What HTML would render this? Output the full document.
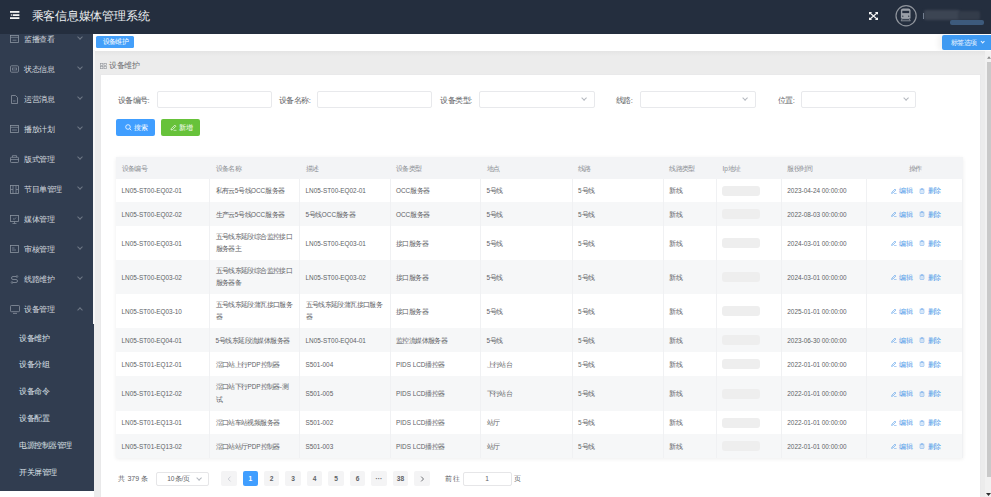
<!DOCTYPE html>
<html><head><meta charset="utf-8">
<style>
*{box-sizing:border-box;margin:0;padding:0}
html,body{width:991px;height:497px;overflow:hidden;background:#fff;font-family:"Liberation Sans",sans-serif}
.a{position:absolute}
i{font-style:normal;display:inline-block;width:var(--cw,1em)}
#hd{left:0;top:0;width:991px;height:34px;background:#242e3e}
#sb{left:0;top:34px;width:94px;height:457px;background:#313d50;overflow:hidden}
.mt{position:absolute;left:24px;color:#d3d8df;font-size:7.5px;--cw:7.5px;line-height:10px;white-space:nowrap}
.ic{position:absolute;left:10px}
.ic svg,.tbl svg,.btn svg{display:block}
.ch{position:absolute;left:77.5px;width:4px;height:4px;border-right:0.7px solid #6f7886;border-bottom:0.7px solid #6f7886;transform:rotate(45deg)}
.chu{transform:rotate(225deg)}
.si{position:absolute;left:19px;color:#dde2e8;font-size:7.5px;--cw:7.55px;line-height:10px;white-space:nowrap}
#tb{left:93px;top:34px;width:898px;height:17px;background:#fff;box-shadow:0 1px 2px rgba(0,0,0,.06)}
#ct{left:94px;top:50.5px;width:897px;height:446.5px;background:linear-gradient(#e4e4e4,#ececec 5px)}
#card{left:99.5px;top:74.3px;width:881px;height:430px;background:#fff;border:1px solid #e9e9ea}
.lbl{position:absolute;font-size:7.6px;--cw:7.5px;color:#606266;line-height:10px;white-space:nowrap;top:95.7px}
.inp{position:absolute;top:91px;height:17.3px;width:116px;border:1px solid #e8e9ec;border-radius:2px;background:#fff}
.ar{position:absolute;right:7.5px;top:4.2px;width:4.2px;height:4.2px;border-right:0.7px solid #b4b8bf;border-bottom:0.7px solid #b4b8bf;transform:rotate(45deg)}
.btn{position:absolute;top:119px;height:17px;width:39px;border-radius:2px;color:#fff;font-size:6.8px;--cw:6.6px;line-height:17px;white-space:nowrap}
.tbl{position:absolute;--cw:6.4px;left:116px;top:157px;width:847px;height:301px;box-shadow:0 1px 4px rgba(0,0,0,.07);font-size:6.4px;color:#606266}
.row{position:absolute;left:0;width:847px}
.cell{position:absolute;top:0;bottom:0;border-right:0.6px solid #f0f1f3;overflow:hidden}
.cell span{position:absolute;left:5.5px;top:calc(50% + 0.6px);transform:translateY(-50%);line-height:12.6px;white-space:nowrap}
.tbl i{font-size:6.85px}
.hdr{background:#f3f4f6;color:#8c8f94}
.hdr .cell{border-right:none}
.g{background:#f6f7f8}
.w{background:#fff}
.ip{position:absolute;left:5px;top:50%;margin-top:-5px;width:38px;height:10px;background:#eeeeee;border-radius:3px}
.lk{position:absolute;color:#4a97e8;white-space:nowrap;line-height:10px}
.pg{position:absolute;top:471px;height:15px;width:15.5px;background:#f4f4f5;border-radius:2px;font-size:6.6px;line-height:15px;text-align:center;color:#606266;font-weight:bold}
</style></head><body>
<div id="hd" class="a">
<svg class="a" style="left:10px;top:11px" width="10" height="9" viewBox="0 0 10 9"><rect x="0" y="0" width="9.4" height="1.8" fill="#f2f2f2"/><rect x="2.8" y="3.2" width="6.6" height="1.8" fill="#f2f2f2"/><rect x="0" y="6.2" width="9.4" height="1.8" fill="#f2f2f2"/><path d="M0.4 4.1L2.1 3.1V5.1Z" fill="#f2f2f2"/></svg>
<div class="a" style="left:31.5px;top:9px;font-size:11.8px;--cw:11.8px;line-height:14px;color:#eceef1;white-space:nowrap"><i>乘</i><i>客</i><i>信</i><i>息</i><i>媒</i><i>体</i><i>管</i><i>理</i><i>系</i><i>统</i></div>
<svg class="a" style="left:869px;top:12px" width="9" height="8" viewBox="0 0 9 8"><g stroke="#f4f4f4" stroke-width="1.15" fill="none"><path d="M1 1L8 7M8 1L1 7"/></g><g fill="#f4f4f4"><path d="M0 0H3.2L0 2.8Z"/><path d="M9 0H5.8L9 2.8Z"/><path d="M0 8H3.2L0 5.2Z"/><path d="M9 8H5.8L9 5.2Z"/></g></svg>
<svg class="a" style="left:894px;top:4px" width="24" height="24" viewBox="0 0 24 24"><circle cx="12.1" cy="11.7" r="10.1" stroke="#8f949c" stroke-width="1.2" fill="none"/><path d="M6.9 14.6V6.6Q6.9 4.5 9 4.5H14.4Q16.5 4.5 16.5 6.6V14.6Z" fill="#9a9fa7"/><rect x="8.3" y="6.8" width="6.9" height="2.3" fill="#262f3f"/><circle cx="8.8" cy="12.2" r="0.65" fill="#262f3f"/><circle cx="14.7" cy="12.2" r="0.65" fill="#262f3f"/><rect x="8.2" y="14.2" width="7" height="1" fill="#9a9fa7"/><path d="M8.3 14.6L7.2 16.6M15.1 14.6L16.2 16.6M7 16.8H16.4" stroke="#9a9fa7" stroke-width="0.8" fill="none"/></svg>
<div class="a" style="left:922.5px;top:13px;width:1px;height:6px;background:#b9c8dc;opacity:.7"></div>
<div class="a" style="left:924px;top:10px;width:36px;height:10px;background:#3c4553;border-radius:2px;filter:blur(0.8px)"></div>
<div class="a" style="left:958px;top:10.5px;width:22px;height:9px;background:#333c4a;border-radius:2px;filter:blur(1px)"></div>
<div class="a" style="left:950px;top:20px;width:34px;height:4.5px;background:#3d5a7c;border-radius:2px;filter:blur(0.7px)"></div>
</div>
<div id="sb" class="a">
<div class="ic" style="top:0.9px"><svg width="9" height="8" viewBox="0 0 9 8"><rect x="0.5" y="0.5" width="8" height="7" fill="none" stroke="#8a93a0" stroke-width="0.8"/><path d="M0.5 2.3H8.5M2.5 5.2H6.5" stroke="#8a93a0" stroke-width="0.7"/></svg></div>
<div class="mt" style="top:0.5px"><i>监</i><i>播</i><i>查</i><i>看</i></div>
<div class="ch" style="top:1.0px"></div>
<div class="ic" style="top:30.9px"><svg width="9" height="8" viewBox="0 0 9 8"><rect x="0.5" y="0.8" width="8" height="6.4" rx="1" fill="none" stroke="#8a93a0" stroke-width="0.8"/><rect x="2.3" y="3" width="4.4" height="2" fill="none" stroke="#8a93a0" stroke-width="0.6"/></svg></div>
<div class="mt" style="top:30.5px"><i>状</i><i>态</i><i>信</i><i>息</i></div>
<div class="ch" style="top:31.0px"></div>
<div class="ic" style="top:60.9px"><svg width="9" height="9" viewBox="0 0 9 9"><path d="M1.5 0.5H5.5L7.5 2.5V8.5H1.5Z" fill="none" stroke="#8a93a0" stroke-width="0.8"/><path d="M3 6H5.5" stroke="#8a93a0" stroke-width="0.7"/></svg></div>
<div class="mt" style="top:60.5px"><i>运</i><i>营</i><i>消</i><i>息</i></div>
<div class="ch" style="top:61.0px"></div>
<div class="ic" style="top:90.9px"><svg width="9" height="8" viewBox="0 0 9 8"><rect x="0.5" y="0.5" width="8" height="7" fill="none" stroke="#8a93a0" stroke-width="0.8"/><path d="M0.5 2.3H8.5M2 5H7" stroke="#8a93a0" stroke-width="0.7"/></svg></div>
<div class="mt" style="top:90.5px"><i>播</i><i>放</i><i>计</i><i>划</i></div>
<div class="ch" style="top:91.0px"></div>
<div class="ic" style="top:120.9px"><svg width="9" height="8" viewBox="0 0 9 8"><rect x="0.5" y="2.3" width="8" height="5.2" rx="0.8" fill="none" stroke="#8a93a0" stroke-width="0.8"/><path d="M2.5 2.3V0.6H6.5V2.3M0.5 4.5H8.5" fill="none" stroke="#8a93a0" stroke-width="0.7"/></svg></div>
<div class="mt" style="top:120.5px"><i>版</i><i>式</i><i>管</i><i>理</i></div>
<div class="ch" style="top:121.0px"></div>
<div class="ic" style="top:150.9px"><svg width="9" height="9" viewBox="0 0 9 9"><rect x="0.5" y="0.5" width="8" height="8" fill="none" stroke="#8a93a0" stroke-width="0.8"/><path d="M3 0.5V8.5M6 0.5V8.5M0.5 4.5H3M6 4.5H8.5" stroke="#8a93a0" stroke-width="0.7"/></svg></div>
<div class="mt" style="top:150.5px"><i>节</i><i>目</i><i>单</i><i>管</i><i>理</i></div>
<div class="ch" style="top:151.0px"></div>
<div class="ic" style="top:180.9px"><svg width="9" height="9" viewBox="0 0 9 9"><rect x="0.5" y="0.5" width="8" height="6" fill="none" stroke="#8a93a0" stroke-width="0.8"/><path d="M4.5 6.5V8.5M2.5 8.5H6.5M3 3.5L4.2 4.5L6 2.5" fill="none" stroke="#8a93a0" stroke-width="0.7"/></svg></div>
<div class="mt" style="top:180.5px"><i>媒</i><i>体</i><i>管</i><i>理</i></div>
<div class="ch" style="top:181.0px"></div>
<div class="ic" style="top:210.9px"><svg width="9" height="8" viewBox="0 0 9 8"><rect x="0.5" y="0.5" width="8" height="7" fill="none" stroke="#8a93a0" stroke-width="0.8"/><path d="M2 3H4.5M2 5H6" stroke="#8a93a0" stroke-width="0.7"/></svg></div>
<div class="mt" style="top:210.5px"><i>审</i><i>核</i><i>管</i><i>理</i></div>
<div class="ch" style="top:211.0px"></div>
<div class="ic" style="top:240.9px"><svg width="9" height="9" viewBox="0 0 9 9"><path d="M6.5 1.5H3A1.5 1.5 0 0 0 3 4.5H6A1.5 1.5 0 0 1 6 7.5H2.5" fill="none" stroke="#8a93a0" stroke-width="0.8"/><circle cx="7" cy="1.5" r="0.9" fill="none" stroke="#8a93a0" stroke-width="0.6"/><circle cx="2" cy="7.5" r="0.9" fill="none" stroke="#8a93a0" stroke-width="0.6"/></svg></div>
<div class="mt" style="top:240.5px"><i>线</i><i>路</i><i>维</i><i>护</i></div>
<div class="ch" style="top:241.0px"></div>
<div class="ic" style="top:270.9px"><svg width="10" height="9" viewBox="0 0 10 9"><rect x="0.5" y="0.5" width="9" height="6.2" rx="0.8" fill="none" stroke="#8a93a0" stroke-width="0.8"/><path d="M3 8.4H7" stroke="#8a93a0" stroke-width="0.8"/></svg></div>
<div class="mt" style="top:270.5px"><i>设</i><i>备</i><i>管</i><i>理</i></div>
<div class="ch chu" style="top:273.5px"></div>
<div class="si" style="top:299.6px"><i>设</i><i>备</i><i>维</i><i>护</i></div>
<div class="si" style="top:326.4px"><i>设</i><i>备</i><i>分</i><i>组</i></div>
<div class="si" style="top:353.2px"><i>设</i><i>备</i><i>命</i><i>令</i></div>
<div class="si" style="top:380.0px"><i>设</i><i>备</i><i>配</i><i>置</i></div>
<div class="si" style="top:406.8px"><i>电</i><i>源</i><i>控</i><i>制</i><i>器</i><i>管</i><i>理</i></div>
<div class="si" style="top:433.6px"><i>开</i><i>关</i><i>屏</i><i>管</i><i>理</i></div>
</div>
<div id="tb" class="a">
<div class="a" style="left:3px;top:2.2px;width:38px;height:12.3px;background:#439ffa;border-radius:1.5px;color:#fff;font-size:6.85px;--cw:6.4px;line-height:12.3px;padding-left:6.5px"><i>设</i><i>备</i><i>维</i><i>护</i></div>
<div class="a" style="left:849px;top:1px;width:49px;height:15px;background:#3f9af2;box-shadow:-4px 0 5px rgba(0,0,0,.05);border-radius:2px 0 0 2px;color:#e8f2ff;font-size:6.85px;--cw:6.5px;line-height:15px;padding-left:8.5px;white-space:nowrap"><i>标</i><i>签</i><i>选</i><i>项</i></div>
<div class="a" style="left:888px;top:5.6px;width:3.4px;height:3.4px;border-right:0.65px solid #e8f2ff;border-bottom:0.65px solid #e8f2ff;transform:rotate(45deg)"></div>
</div>
<div id="ct" class="a"></div>
<div class="a" style="left:93px;top:50px;width:1.8px;height:274px;background:#f6f6f6"></div>
<div id="card" class="a"></div>
<div class="a" style="left:985px;top:51px;width:6px;height:446px;background:#f1f1f1"></div>
<div class="a" style="left:987px;top:61.5px;width:4px;height:415px;background:#c9c9c9"></div>
<svg class="a" style="left:987px;top:56px" width="4" height="3"><path d="M2 0.3L4 2.7H0Z" fill="#8a8a8a"/></svg>
<svg class="a" style="left:986px;top:492px" width="5" height="5"><path d="M0 1H5L2.5 4Z" fill="#303030"/></svg>
<svg class="a" style="left:100px;top:62.5px" width="7" height="6" viewBox="0 0 7 6"><g fill="none" stroke="#8f9399" stroke-width="0.6"><rect x="0.3" y="0.3" width="2.6" height="2.3"/><rect x="4" y="0.3" width="2.6" height="2.3"/><rect x="0.3" y="3.4" width="2.6" height="2.3"/><rect x="4" y="3.4" width="2.6" height="2.3"/></g></svg>
<div class="a" style="left:109px;top:61px;font-size:7.5px;--cw:7.5px;line-height:10px;color:#6b6d71;white-space:nowrap"><i>设</i><i>备</i><i>维</i><i>护</i></div>
<div class="lbl" style="left:117.6px;"><i>设</i><i>备</i><i>编</i><i>号</i>:</div>
<div class="inp" style="left:156.5px;width:115px"></div>
<div class="lbl" style="left:278.7px;"><i>设</i><i>备</i><i>名</i><i>称</i>:</div>
<div class="inp" style="left:317px;width:115px"></div>
<div class="lbl" style="left:440px;"><i>设</i><i>备</i><i>类</i><i>型</i>:</div>
<div class="inp" style="left:479px;width:115.5px"><div class="ar"></div></div>
<div class="lbl" style="left:615.8px;"><i>线</i><i>路</i>:</div>
<div class="inp" style="left:640px;width:115.5px"><div class="ar"></div></div>
<div class="lbl" style="left:777.7px;"><i>位</i><i>置</i>:</div>
<div class="inp" style="left:800.7px;width:115.5px"><div class="ar"></div></div>
<div class="btn" style="left:116px;background:#409eff"><svg class="a" style="left:9px;top:5px" width="7" height="7" viewBox="0 0 7 7"><circle cx="3" cy="3" r="2.3" fill="none" stroke="#fff" stroke-width="0.8"/><path d="M4.7 4.7L6.3 6.3" stroke="#fff" stroke-width="0.8"/></svg><span class="a" style="left:18px;top:0"><i>搜</i><i>索</i></span></div>
<div class="btn" style="left:161px;background:#67c23a"><svg class="a" style="left:9px;top:5px" width="7" height="7" viewBox="0 0 7 7"><path d="M1 6L1.3 4.6L4.8 1.1L5.9 2.2L2.4 5.7Z" fill="none" stroke="#fff" stroke-width="0.7"/><path d="M3.5 6.3H6.5" stroke="#fff" stroke-width="0.6"/></svg><span class="a" style="left:18px;top:0"><i>新</i><i>增</i></span></div>
<div class="tbl">
<div class="row hdr" style="top:0px;height:22px"><div class="cell" style="left:0.0px;width:94.0px"><span><i>设</i><i>备</i><i>编</i><i>号</i></span></div><div class="cell" style="left:94.0px;width:90.0px"><span><i>设</i><i>备</i><i>名</i><i>称</i></span></div><div class="cell" style="left:184.0px;width:90.5px"><span><i>描</i><i>述</i></span></div><div class="cell" style="left:274.5px;width:90.5px"><span><i>设</i><i>备</i><i>类</i><i>型</i></span></div><div class="cell" style="left:365.0px;width:91.6px"><span><i>地</i><i>点</i></span></div><div class="cell" style="left:456.6px;width:91.1px"><span><i>线</i><i>路</i></span></div><div class="cell" style="left:547.7px;width:53.3px"><span><i>线</i><i>路</i><i>类</i><i>型</i></span></div><div class="cell" style="left:601.0px;width:64.8px"><span>Ip<i>地</i><i>址</i></span></div><div class="cell" style="left:665.8px;width:85.1px"><span><i>服</i><i>役</i><i>时</i><i>间</i></span></div><div class="cell" style="left:750.9px;width:96.4px"><span style="left:0;width:100%;text-align:center"><i>操</i><i>作</i></span></div></div>
<div class="row w" style="top:22px;height:23px"><div class="cell" style="left:0.0px;width:94.0px"><span>LN05-ST00-EQ02-01</span></div><div class="cell" style="left:94.0px;width:90.0px"><span><i>私</i><i>有</i><i>云</i>5<i>号</i><i>线</i>OCC<i>服</i><i>务</i><i>器</i></span></div><div class="cell" style="left:184.0px;width:90.5px"><span>LN05-ST00-EQ02-01</span></div><div class="cell" style="left:274.5px;width:90.5px"><span>OCC<i>服</i><i>务</i><i>器</i></span></div><div class="cell" style="left:365.0px;width:91.6px"><span>5<i>号</i><i>线</i></span></div><div class="cell" style="left:456.6px;width:91.1px"><span>5<i>号</i><i>线</i></span></div><div class="cell" style="left:547.7px;width:53.3px"><span><i>新</i><i>线</i></span></div><div class="cell" style="left:601.0px;width:64.8px"><div class="ip"></div></div><div class="cell" style="left:665.8px;width:85.1px"><span>2023-04-24 00:00:00</span></div><div class="cell" style="left:750.9px;width:96.4px"><svg class="a" style="left:24px;top:50%;margin-top:-3px" width="6" height="6" viewBox="0 0 6 6"><path d="M0.6 5.4L0.9 4.2L4 1.1L4.9 2L1.8 5.1Z" fill="none" stroke="#4a97e8" stroke-width="0.6"/><path d="M3 5.6H5.6" stroke="#4a97e8" stroke-width="0.5"/></svg><span style="left:32.6px;color:#4a97e8;--cw:6.3px"><i>编</i><i>辑</i></span><svg class="a" style="left:52.5px;top:50%;margin-top:-3px" width="6" height="6" viewBox="0 0 6 6"><path d="M0.6 1.3H5.4M2.2 1.3V0.5H3.8V1.3" fill="none" stroke="#6aa6ea" stroke-width="0.55"/><rect x="1.1" y="1.8" width="3.8" height="3.8" rx="0.9" fill="none" stroke="#6aa6ea" stroke-width="0.6"/><path d="M2 3.3H4M2 4.3H4" stroke="#8dbcf0" stroke-width="0.4"/></svg><span style="left:60.7px;color:#4a97e8;--cw:6.3px"><i>删</i><i>除</i></span></div></div>
<div class="row g" style="top:45px;height:24px"><div class="cell" style="left:0.0px;width:94.0px"><span>LN05-ST00-EQ02-02</span></div><div class="cell" style="left:94.0px;width:90.0px"><span><i>生</i><i>产</i><i>云</i>5<i>号</i><i>线</i>OCC<i>服</i><i>务</i><i>器</i></span></div><div class="cell" style="left:184.0px;width:90.5px"><span>5<i>号</i><i>线</i>OCC<i>服</i><i>务</i><i>器</i></span></div><div class="cell" style="left:274.5px;width:90.5px"><span>OCC<i>服</i><i>务</i><i>器</i></span></div><div class="cell" style="left:365.0px;width:91.6px"><span>5<i>号</i><i>线</i></span></div><div class="cell" style="left:456.6px;width:91.1px"><span>5<i>号</i><i>线</i></span></div><div class="cell" style="left:547.7px;width:53.3px"><span><i>新</i><i>线</i></span></div><div class="cell" style="left:601.0px;width:64.8px"><div class="ip"></div></div><div class="cell" style="left:665.8px;width:85.1px"><span>2022-08-03 00:00:00</span></div><div class="cell" style="left:750.9px;width:96.4px"><svg class="a" style="left:24px;top:50%;margin-top:-3px" width="6" height="6" viewBox="0 0 6 6"><path d="M0.6 5.4L0.9 4.2L4 1.1L4.9 2L1.8 5.1Z" fill="none" stroke="#4a97e8" stroke-width="0.6"/><path d="M3 5.6H5.6" stroke="#4a97e8" stroke-width="0.5"/></svg><span style="left:32.6px;color:#4a97e8;--cw:6.3px"><i>编</i><i>辑</i></span><svg class="a" style="left:52.5px;top:50%;margin-top:-3px" width="6" height="6" viewBox="0 0 6 6"><path d="M0.6 1.3H5.4M2.2 1.3V0.5H3.8V1.3" fill="none" stroke="#6aa6ea" stroke-width="0.55"/><rect x="1.1" y="1.8" width="3.8" height="3.8" rx="0.9" fill="none" stroke="#6aa6ea" stroke-width="0.6"/><path d="M2 3.3H4M2 4.3H4" stroke="#8dbcf0" stroke-width="0.4"/></svg><span style="left:60.7px;color:#4a97e8;--cw:6.3px"><i>删</i><i>除</i></span></div></div>
<div class="row w" style="top:69px;height:34px"><div class="cell" style="left:0.0px;width:94.0px"><span>LN05-ST00-EQ03-01</span></div><div class="cell" style="left:94.0px;width:90.0px"><span><i>五</i><i>号</i><i>线</i><i>东</i><i>延</i><i>段</i><i>综</i><i>合</i><i>监</i><i>控</i><i>接</i><i>口</i><br><i>服</i><i>务</i><i>器</i><i>主</i></span></div><div class="cell" style="left:184.0px;width:90.5px"><span>LN05-ST00-EQ03-01</span></div><div class="cell" style="left:274.5px;width:90.5px"><span><i>接</i><i>口</i><i>服</i><i>务</i><i>器</i></span></div><div class="cell" style="left:365.0px;width:91.6px"><span>5<i>号</i><i>线</i></span></div><div class="cell" style="left:456.6px;width:91.1px"><span>5<i>号</i><i>线</i></span></div><div class="cell" style="left:547.7px;width:53.3px"><span><i>新</i><i>线</i></span></div><div class="cell" style="left:601.0px;width:64.8px"><div class="ip"></div></div><div class="cell" style="left:665.8px;width:85.1px"><span>2024-03-01 00:00:00</span></div><div class="cell" style="left:750.9px;width:96.4px"><svg class="a" style="left:24px;top:50%;margin-top:-3px" width="6" height="6" viewBox="0 0 6 6"><path d="M0.6 5.4L0.9 4.2L4 1.1L4.9 2L1.8 5.1Z" fill="none" stroke="#4a97e8" stroke-width="0.6"/><path d="M3 5.6H5.6" stroke="#4a97e8" stroke-width="0.5"/></svg><span style="left:32.6px;color:#4a97e8;--cw:6.3px"><i>编</i><i>辑</i></span><svg class="a" style="left:52.5px;top:50%;margin-top:-3px" width="6" height="6" viewBox="0 0 6 6"><path d="M0.6 1.3H5.4M2.2 1.3V0.5H3.8V1.3" fill="none" stroke="#6aa6ea" stroke-width="0.55"/><rect x="1.1" y="1.8" width="3.8" height="3.8" rx="0.9" fill="none" stroke="#6aa6ea" stroke-width="0.6"/><path d="M2 3.3H4M2 4.3H4" stroke="#8dbcf0" stroke-width="0.4"/></svg><span style="left:60.7px;color:#4a97e8;--cw:6.3px"><i>删</i><i>除</i></span></div></div>
<div class="row g" style="top:103px;height:34px"><div class="cell" style="left:0.0px;width:94.0px"><span>LN05-ST00-EQ03-02</span></div><div class="cell" style="left:94.0px;width:90.0px"><span><i>五</i><i>号</i><i>线</i><i>东</i><i>延</i><i>段</i><i>综</i><i>合</i><i>监</i><i>控</i><i>接</i><i>口</i><br><i>服</i><i>务</i><i>器</i><i>备</i></span></div><div class="cell" style="left:184.0px;width:90.5px"><span>LN05-ST00-EQ03-02</span></div><div class="cell" style="left:274.5px;width:90.5px"><span><i>接</i><i>口</i><i>服</i><i>务</i><i>器</i></span></div><div class="cell" style="left:365.0px;width:91.6px"><span>5<i>号</i><i>线</i></span></div><div class="cell" style="left:456.6px;width:91.1px"><span>5<i>号</i><i>线</i></span></div><div class="cell" style="left:547.7px;width:53.3px"><span><i>新</i><i>线</i></span></div><div class="cell" style="left:601.0px;width:64.8px"><div class="ip"></div></div><div class="cell" style="left:665.8px;width:85.1px"><span>2024-03-01 00:00:00</span></div><div class="cell" style="left:750.9px;width:96.4px"><svg class="a" style="left:24px;top:50%;margin-top:-3px" width="6" height="6" viewBox="0 0 6 6"><path d="M0.6 5.4L0.9 4.2L4 1.1L4.9 2L1.8 5.1Z" fill="none" stroke="#4a97e8" stroke-width="0.6"/><path d="M3 5.6H5.6" stroke="#4a97e8" stroke-width="0.5"/></svg><span style="left:32.6px;color:#4a97e8;--cw:6.3px"><i>编</i><i>辑</i></span><svg class="a" style="left:52.5px;top:50%;margin-top:-3px" width="6" height="6" viewBox="0 0 6 6"><path d="M0.6 1.3H5.4M2.2 1.3V0.5H3.8V1.3" fill="none" stroke="#6aa6ea" stroke-width="0.55"/><rect x="1.1" y="1.8" width="3.8" height="3.8" rx="0.9" fill="none" stroke="#6aa6ea" stroke-width="0.6"/><path d="M2 3.3H4M2 4.3H4" stroke="#8dbcf0" stroke-width="0.4"/></svg><span style="left:60.7px;color:#4a97e8;--cw:6.3px"><i>删</i><i>除</i></span></div></div>
<div class="row w" style="top:137px;height:34px"><div class="cell" style="left:0.0px;width:94.0px"><span>LN05-ST00-EQ03-10</span></div><div class="cell" style="left:94.0px;width:90.0px"><span><i>五</i><i>号</i><i>线</i><i>东</i><i>延</i><i>段</i><i>蒲</i><i>瓦</i><i>接</i><i>口</i><i>服</i><i>务</i><br><i>器</i></span></div><div class="cell" style="left:184.0px;width:90.5px"><span><i>五</i><i>号</i><i>线</i><i>东</i><i>延</i><i>段</i><i>蒲</i><i>瓦</i><i>接</i><i>口</i><i>服</i><i>务</i><br><i>器</i></span></div><div class="cell" style="left:274.5px;width:90.5px"><span><i>接</i><i>口</i><i>服</i><i>务</i><i>器</i></span></div><div class="cell" style="left:365.0px;width:91.6px"><span>5<i>号</i><i>线</i></span></div><div class="cell" style="left:456.6px;width:91.1px"><span>5<i>号</i><i>线</i></span></div><div class="cell" style="left:547.7px;width:53.3px"><span><i>新</i><i>线</i></span></div><div class="cell" style="left:601.0px;width:64.8px"><div class="ip"></div></div><div class="cell" style="left:665.8px;width:85.1px"><span>2025-01-01 00:00:00</span></div><div class="cell" style="left:750.9px;width:96.4px"><svg class="a" style="left:24px;top:50%;margin-top:-3px" width="6" height="6" viewBox="0 0 6 6"><path d="M0.6 5.4L0.9 4.2L4 1.1L4.9 2L1.8 5.1Z" fill="none" stroke="#4a97e8" stroke-width="0.6"/><path d="M3 5.6H5.6" stroke="#4a97e8" stroke-width="0.5"/></svg><span style="left:32.6px;color:#4a97e8;--cw:6.3px"><i>编</i><i>辑</i></span><svg class="a" style="left:52.5px;top:50%;margin-top:-3px" width="6" height="6" viewBox="0 0 6 6"><path d="M0.6 1.3H5.4M2.2 1.3V0.5H3.8V1.3" fill="none" stroke="#6aa6ea" stroke-width="0.55"/><rect x="1.1" y="1.8" width="3.8" height="3.8" rx="0.9" fill="none" stroke="#6aa6ea" stroke-width="0.6"/><path d="M2 3.3H4M2 4.3H4" stroke="#8dbcf0" stroke-width="0.4"/></svg><span style="left:60.7px;color:#4a97e8;--cw:6.3px"><i>删</i><i>除</i></span></div></div>
<div class="row g" style="top:171px;height:24px"><div class="cell" style="left:0.0px;width:94.0px"><span>LN05-ST00-EQ04-01</span></div><div class="cell" style="left:94.0px;width:90.0px"><span>5<i>号</i><i>线</i><i>东</i><i>延</i><i>段</i><i>流</i><i>媒</i><i>体</i><i>服</i><i>务</i><i>器</i></span></div><div class="cell" style="left:184.0px;width:90.5px"><span>LN05-ST00-EQ04-01</span></div><div class="cell" style="left:274.5px;width:90.5px"><span><i>监</i><i>控</i><i>流</i><i>媒</i><i>体</i><i>服</i><i>务</i><i>器</i></span></div><div class="cell" style="left:365.0px;width:91.6px"><span>5<i>号</i><i>线</i></span></div><div class="cell" style="left:456.6px;width:91.1px"><span>5<i>号</i><i>线</i></span></div><div class="cell" style="left:547.7px;width:53.3px"><span><i>新</i><i>线</i></span></div><div class="cell" style="left:601.0px;width:64.8px"><div class="ip"></div></div><div class="cell" style="left:665.8px;width:85.1px"><span>2023-06-30 00:00:00</span></div><div class="cell" style="left:750.9px;width:96.4px"><svg class="a" style="left:24px;top:50%;margin-top:-3px" width="6" height="6" viewBox="0 0 6 6"><path d="M0.6 5.4L0.9 4.2L4 1.1L4.9 2L1.8 5.1Z" fill="none" stroke="#4a97e8" stroke-width="0.6"/><path d="M3 5.6H5.6" stroke="#4a97e8" stroke-width="0.5"/></svg><span style="left:32.6px;color:#4a97e8;--cw:6.3px"><i>编</i><i>辑</i></span><svg class="a" style="left:52.5px;top:50%;margin-top:-3px" width="6" height="6" viewBox="0 0 6 6"><path d="M0.6 1.3H5.4M2.2 1.3V0.5H3.8V1.3" fill="none" stroke="#6aa6ea" stroke-width="0.55"/><rect x="1.1" y="1.8" width="3.8" height="3.8" rx="0.9" fill="none" stroke="#6aa6ea" stroke-width="0.6"/><path d="M2 3.3H4M2 4.3H4" stroke="#8dbcf0" stroke-width="0.4"/></svg><span style="left:60.7px;color:#4a97e8;--cw:6.3px"><i>删</i><i>除</i></span></div></div>
<div class="row w" style="top:195px;height:24px"><div class="cell" style="left:0.0px;width:94.0px"><span>LN05-ST01-EQ12-01</span></div><div class="cell" style="left:94.0px;width:90.0px"><span><i>滘</i><i>口</i><i>站</i><i>上</i><i>行</i>PDP<i>控</i><i>制</i><i>器</i></span></div><div class="cell" style="left:184.0px;width:90.5px"><span>S501-004</span></div><div class="cell" style="left:274.5px;width:90.5px"><span>PIDS LCD<i>播</i><i>控</i><i>器</i></span></div><div class="cell" style="left:365.0px;width:91.6px"><span><i>上</i><i>行</i><i>站</i><i>台</i></span></div><div class="cell" style="left:456.6px;width:91.1px"><span>5<i>号</i><i>线</i></span></div><div class="cell" style="left:547.7px;width:53.3px"><span><i>新</i><i>线</i></span></div><div class="cell" style="left:601.0px;width:64.8px"><div class="ip"></div></div><div class="cell" style="left:665.8px;width:85.1px"><span>2022-01-01 00:00:00</span></div><div class="cell" style="left:750.9px;width:96.4px"><svg class="a" style="left:24px;top:50%;margin-top:-3px" width="6" height="6" viewBox="0 0 6 6"><path d="M0.6 5.4L0.9 4.2L4 1.1L4.9 2L1.8 5.1Z" fill="none" stroke="#4a97e8" stroke-width="0.6"/><path d="M3 5.6H5.6" stroke="#4a97e8" stroke-width="0.5"/></svg><span style="left:32.6px;color:#4a97e8;--cw:6.3px"><i>编</i><i>辑</i></span><svg class="a" style="left:52.5px;top:50%;margin-top:-3px" width="6" height="6" viewBox="0 0 6 6"><path d="M0.6 1.3H5.4M2.2 1.3V0.5H3.8V1.3" fill="none" stroke="#6aa6ea" stroke-width="0.55"/><rect x="1.1" y="1.8" width="3.8" height="3.8" rx="0.9" fill="none" stroke="#6aa6ea" stroke-width="0.6"/><path d="M2 3.3H4M2 4.3H4" stroke="#8dbcf0" stroke-width="0.4"/></svg><span style="left:60.7px;color:#4a97e8;--cw:6.3px"><i>删</i><i>除</i></span></div></div>
<div class="row g" style="top:219px;height:35px"><div class="cell" style="left:0.0px;width:94.0px"><span>LN05-ST01-EQ12-02</span></div><div class="cell" style="left:94.0px;width:90.0px"><span><i>滘</i><i>口</i><i>站</i><i>下</i><i>行</i>PDP<i>控</i><i>制</i><i>器</i>-<i>测</i><br><i>试</i></span></div><div class="cell" style="left:184.0px;width:90.5px"><span>S501-005</span></div><div class="cell" style="left:274.5px;width:90.5px"><span>PIDS LCD<i>播</i><i>控</i><i>器</i></span></div><div class="cell" style="left:365.0px;width:91.6px"><span><i>下</i><i>行</i><i>站</i><i>台</i></span></div><div class="cell" style="left:456.6px;width:91.1px"><span>5<i>号</i><i>线</i></span></div><div class="cell" style="left:547.7px;width:53.3px"><span><i>新</i><i>线</i></span></div><div class="cell" style="left:601.0px;width:64.8px"><div class="ip"></div></div><div class="cell" style="left:665.8px;width:85.1px"><span>2022-01-01 00:00:00</span></div><div class="cell" style="left:750.9px;width:96.4px"><svg class="a" style="left:24px;top:50%;margin-top:-3px" width="6" height="6" viewBox="0 0 6 6"><path d="M0.6 5.4L0.9 4.2L4 1.1L4.9 2L1.8 5.1Z" fill="none" stroke="#4a97e8" stroke-width="0.6"/><path d="M3 5.6H5.6" stroke="#4a97e8" stroke-width="0.5"/></svg><span style="left:32.6px;color:#4a97e8;--cw:6.3px"><i>编</i><i>辑</i></span><svg class="a" style="left:52.5px;top:50%;margin-top:-3px" width="6" height="6" viewBox="0 0 6 6"><path d="M0.6 1.3H5.4M2.2 1.3V0.5H3.8V1.3" fill="none" stroke="#6aa6ea" stroke-width="0.55"/><rect x="1.1" y="1.8" width="3.8" height="3.8" rx="0.9" fill="none" stroke="#6aa6ea" stroke-width="0.6"/><path d="M2 3.3H4M2 4.3H4" stroke="#8dbcf0" stroke-width="0.4"/></svg><span style="left:60.7px;color:#4a97e8;--cw:6.3px"><i>删</i><i>除</i></span></div></div>
<div class="row w" style="top:254px;height:23px"><div class="cell" style="left:0.0px;width:94.0px"><span>LN05-ST01-EQ13-01</span></div><div class="cell" style="left:94.0px;width:90.0px"><span><i>滘</i><i>口</i><i>站</i><i>车</i><i>站</i><i>视</i><i>频</i><i>服</i><i>务</i><i>器</i></span></div><div class="cell" style="left:184.0px;width:90.5px"><span>S501-002</span></div><div class="cell" style="left:274.5px;width:90.5px"><span>PIDS LCD<i>播</i><i>控</i><i>器</i></span></div><div class="cell" style="left:365.0px;width:91.6px"><span><i>站</i><i>厅</i></span></div><div class="cell" style="left:456.6px;width:91.1px"><span>5<i>号</i><i>线</i></span></div><div class="cell" style="left:547.7px;width:53.3px"><span><i>新</i><i>线</i></span></div><div class="cell" style="left:601.0px;width:64.8px"><div class="ip"></div></div><div class="cell" style="left:665.8px;width:85.1px"><span>2022-01-01 00:00:00</span></div><div class="cell" style="left:750.9px;width:96.4px"><svg class="a" style="left:24px;top:50%;margin-top:-3px" width="6" height="6" viewBox="0 0 6 6"><path d="M0.6 5.4L0.9 4.2L4 1.1L4.9 2L1.8 5.1Z" fill="none" stroke="#4a97e8" stroke-width="0.6"/><path d="M3 5.6H5.6" stroke="#4a97e8" stroke-width="0.5"/></svg><span style="left:32.6px;color:#4a97e8;--cw:6.3px"><i>编</i><i>辑</i></span><svg class="a" style="left:52.5px;top:50%;margin-top:-3px" width="6" height="6" viewBox="0 0 6 6"><path d="M0.6 1.3H5.4M2.2 1.3V0.5H3.8V1.3" fill="none" stroke="#6aa6ea" stroke-width="0.55"/><rect x="1.1" y="1.8" width="3.8" height="3.8" rx="0.9" fill="none" stroke="#6aa6ea" stroke-width="0.6"/><path d="M2 3.3H4M2 4.3H4" stroke="#8dbcf0" stroke-width="0.4"/></svg><span style="left:60.7px;color:#4a97e8;--cw:6.3px"><i>删</i><i>除</i></span></div></div>
<div class="row g" style="top:277px;height:24px"><div class="cell" style="left:0.0px;width:94.0px"><span>LN05-ST01-EQ13-02</span></div><div class="cell" style="left:94.0px;width:90.0px"><span><i>滘</i><i>口</i><i>站</i><i>站</i><i>厅</i>PDP<i>控</i><i>制</i><i>器</i></span></div><div class="cell" style="left:184.0px;width:90.5px"><span>S501-003</span></div><div class="cell" style="left:274.5px;width:90.5px"><span>PIDS LCD<i>播</i><i>控</i><i>器</i></span></div><div class="cell" style="left:365.0px;width:91.6px"><span><i>站</i><i>厅</i></span></div><div class="cell" style="left:456.6px;width:91.1px"><span>5<i>号</i><i>线</i></span></div><div class="cell" style="left:547.7px;width:53.3px"><span><i>新</i><i>线</i></span></div><div class="cell" style="left:601.0px;width:64.8px"><div class="ip"></div></div><div class="cell" style="left:665.8px;width:85.1px"><span>2022-01-01 00:00:00</span></div><div class="cell" style="left:750.9px;width:96.4px"><svg class="a" style="left:24px;top:50%;margin-top:-3px" width="6" height="6" viewBox="0 0 6 6"><path d="M0.6 5.4L0.9 4.2L4 1.1L4.9 2L1.8 5.1Z" fill="none" stroke="#4a97e8" stroke-width="0.6"/><path d="M3 5.6H5.6" stroke="#4a97e8" stroke-width="0.5"/></svg><span style="left:32.6px;color:#4a97e8;--cw:6.3px"><i>编</i><i>辑</i></span><svg class="a" style="left:52.5px;top:50%;margin-top:-3px" width="6" height="6" viewBox="0 0 6 6"><path d="M0.6 1.3H5.4M2.2 1.3V0.5H3.8V1.3" fill="none" stroke="#6aa6ea" stroke-width="0.55"/><rect x="1.1" y="1.8" width="3.8" height="3.8" rx="0.9" fill="none" stroke="#6aa6ea" stroke-width="0.6"/><path d="M2 3.3H4M2 4.3H4" stroke="#8dbcf0" stroke-width="0.4"/></svg><span style="left:60.7px;color:#4a97e8;--cw:6.3px"><i>删</i><i>除</i></span></div></div>
</div>
<div class="a" style="left:118.4px;top:474px;font-size:7px;--cw:7.1px;line-height:10px;color:#606266;white-space:nowrap"><i>共</i> 379 <i>条</i></div>
<div class="a" style="left:156.2px;top:471.5px;width:53px;height:14.5px;border:1px solid #e6e6e8;border-radius:2px;background:#fff"><span class="a" style="left:10px;top:2.5px;font-size:6.6px;--cw:6.95px;line-height:8px;color:#606266;white-space:nowrap">10<i>条</i>/<i>页</i></span><div class="ar" style="right:7px;top:3.5px"></div></div>
<div class="pg" style="left:221.05px"><svg class="a" style="left:5.5px;top:5px" width="5" height="6"><path d="M3.5 0.6L1.2 3L3.5 5.4" fill="none" stroke="#c0c4cc" stroke-width="0.8"/></svg></div>
<div class="pg" style="left:242.55px;background:#409eff;color:#fff;">1</div>
<div class="pg" style="left:263.95px;">2</div>
<div class="pg" style="left:285.25px;">3</div>
<div class="pg" style="left:306.75px;">4</div>
<div class="pg" style="left:328.25px;">5</div>
<div class="pg" style="left:349.95px;">6</div>
<div class="pg" style="left:371.05px;">···</div>
<div class="pg" style="left:392.65px;">38</div>
<div class="pg" style="left:414.25px"><svg class="a" style="left:5.5px;top:5px" width="5" height="6"><path d="M1.2 0.6L3.5 3L1.2 5.4" fill="none" stroke="#606266" stroke-width="0.9"/></svg></div>
<div class="a" style="left:445.4px;top:474px;font-size:7px;--cw:7.2px;line-height:10px;color:#606266;white-space:nowrap"><i>前</i><i>往</i></div>
<div class="a" style="left:462.5px;top:471.5px;width:49px;height:14px;border:1px solid #e6e6e8;border-radius:2px;background:#fff;font-size:6.6px;line-height:12px;text-align:center;color:#606266">1</div>
<div class="a" style="left:513.6px;top:474px;font-size:7px;--cw:7px;line-height:10px;color:#606266"><i>页</i></div>
</body></html>
